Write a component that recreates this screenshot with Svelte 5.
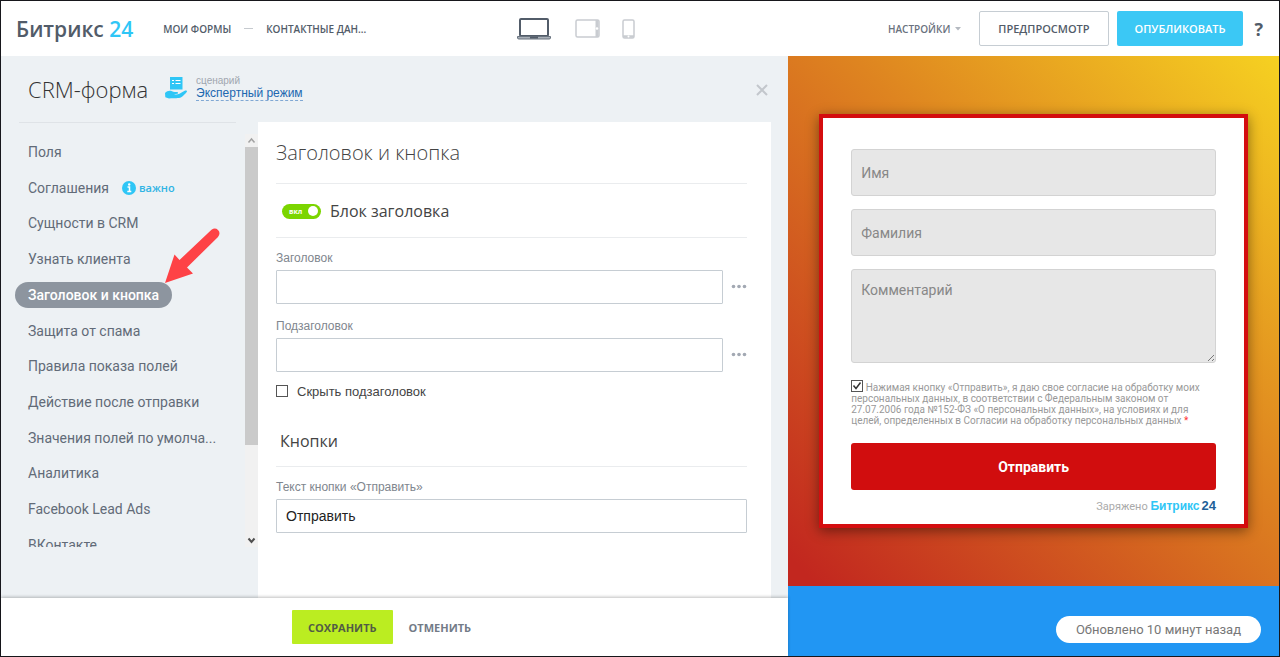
<script>
  const items = [
    { label: 'Поля' },
    { label: 'Соглашения', important: true },
    { label: 'Сущности в CRM' },
    { label: 'Узнать клиента' },
    { label: 'Заголовок и кнопка', active: true },
    { label: 'Защита от спама' },
    { label: 'Правила показа полей' },
    { label: 'Действие после отправки' },
    { label: 'Значения полей по умолча...' },
    { label: 'Аналитика' },
    { label: 'Facebook Lead Ads' },
    { label: 'ВКонтакте' }
  ];

  let headerOn = $state(true);
  let title = $state('');
  let subtitle = $state('');
  let hideSubtitle = $state(false);
  let submitText = $state('Отправить');
  let agreed = $state(true);
</script>

{#snippet more(name)}
  <button class="more" type="button" aria-label={name}>
    <svg width="16" height="6" viewBox="0 0 16 6" fill="#a3a9b3">
      <circle cx="2.500" cy="2.500" r="1.800" /><circle cx="8" cy="2.500" r="1.800" /><circle cx="13.500" cy="2.500" r="1.800" />
    </svg>
  </button>
{/snippet}

<div class="page">
  <header class="topbar">
    <div class="start">
      <a class="logo" href="#home">Битрикс <span>24</span></a>
      <nav class="crumbs">
        <a href="#forms">МОИ ФОРМЫ</a>
        <i></i>
        <a href="#contact">КОНТАКТНЫЕ ДАН...</a>
      </nav>
    </div>
    <div class="devices">
      <button type="button" aria-label="Компьютер">
        <svg width="36" height="24" viewBox="0 0 36 24" fill="none">
          <rect x="4" y="2" width="28" height="17" rx="1" fill="#fff" stroke="#525c69" stroke-width="2" />
          <path d="M1.500 19.500h33v1.500q0 1-1.500 1H3q-1.500 0-1.500-1z" fill="#a9b0b8" stroke="#6a7480" />
          <path d="M14 20.500h8" stroke="#525c69" stroke-width="2" />
        </svg>
      </button>
      <button type="button" aria-label="Планшет">
        <svg width="25" height="19" viewBox="0 0 25 19" fill="none">
          <rect x="1" y="1" width="23" height="17" rx="1.500" fill="#fff" stroke="#c9ccd1" stroke-width="1.500" />
          <path d="M22 1v17" stroke="#c9ccd1" stroke-width="3" />
          <circle cx="22" cy="9.500" r="1.300" fill="#fff" />
        </svg>
      </button>
      <button type="button" aria-label="Телефон">
        <svg width="13" height="20" viewBox="0 0 13 20" fill="none">
          <rect x="1" y="1" width="11" height="18" rx="1.500" fill="#fff" stroke="#c9ccd1" stroke-width="1.500" />
          <path d="M1 17.500h11" stroke="#c9ccd1" stroke-width="2.500" />
          <circle cx="6.500" cy="17.500" r="1" fill="#fff" />
        </svg>
      </button>
    </div>
    <div class="actions">
      <button class="settings" type="button">НАСТРОЙКИ
        <svg width="6" height="4" viewBox="0 0 6 4"><path d="M0 0h6L3 3.500z" fill="#b4b9c0" /></svg>
      </button>
      <button class="btn outline" type="button">ПРЕДПРОСМОТР</button>
      <button class="btn primary" type="button">ОПУБЛИКОВАТЬ</button>
      <button class="help" type="button">?</button>
    </div>
  </header>

  <main>
    <section class="editor">
      <div class="head">
        <h1>CRM-форма</h1>
        <svg class="hand" width="22" height="22" viewBox="0 0 22 22" fill="#2fc6f6">
          <path d="M5 0h12.500v12.500H5z" />
          <path d="M7 3.500h2M10.500 3.500h5M7 6.500h2M10.500 6.500h5" stroke="#fff" stroke-width="1" />
          <path d="M0 16C2 14 4.500 13.300 7 14.200c1.700.7 3.500.8 5.200.9 1 .1 1.200 1.500.2 1.700l-3.400.4c3.500 1 6-.4 8-1.900l3.200-1.700c1.300-.5 2.300.5 1.500 1.500-1.500 1.800-3.500 4-5.500 5.200-1.300.8-3 .9-5 .9H6l-2 .2-3.700-1.200z" />
        </svg>
        <div class="scenario">
          <span>сценарий</span>
          <a href="#scenario">Экспертный режим</a>
        </div>
        <button class="close" type="button" aria-label="Закрыть">
          <svg width="12" height="12" viewBox="0 0 12 12"><path d="M1 1l10 10M11 1L1 11" stroke="#c3c7cc" stroke-width="2" /></svg>
        </button>
      </div>

      <div class="work">
        <aside>
          <hr />
          <div class="scroller">
            <div class="clip">
              <ul>
                {#each items as item}
                  <li>
                    <a href="#section" class:active={item.active}>{item.label}</a>
                    {#if item.important}
                      <span class="note">
                        <svg width="14" height="14" viewBox="0 0 14 14">
                          <circle cx="7" cy="7" r="7" fill="#2fc6f6" />
                          <path d="M5.500 6H7.500v4.500M5.300 10.500h4" stroke="#fff" stroke-width="1.500" fill="none" />
                          <circle cx="7.200" cy="3.500" r="1.200" fill="#fff" />
                        </svg>
                        важно
                      </span>
                    {/if}
                    {#if item.active}
                      <svg class="arrow" width="56" height="56" viewBox="0 0 56 56" fill="#fe4246">
                        <path d="M0 55L9.500 26.500 14.500 32 46.500 1.800Q50-.8 53 2T53 9L22 39.500 28 45.500z" />
                      </svg>
                    {/if}
                  </li>
                {/each}
              </ul>
            </div>
            <div class="bar" aria-hidden="true">
              <svg width="13" height="13" viewBox="0 0 13 13"><path d="M3.500 8.500l3-3.500 3 3.500" fill="none" stroke="#a3a3a3" stroke-width="1.500" /></svg>
              <div class="track"><div class="thumb"></div></div>
              <svg width="13" height="13" viewBox="0 0 13 13"><path d="M3.500 4.500l3 3.500 3-3.500" fill="none" stroke="#505050" stroke-width="2" /></svg>
            </div>
          </div>
        </aside>

        <form class="panel" onsubmit={(e) => e.preventDefault()}>
          <h2>Заголовок и кнопка</h2>
          <div class="switchrow">
            <label>
              <input class="sr" type="checkbox" role="switch" bind:checked={headerOn} />
              <span class="switch" class:off={!headerOn}><b>{headerOn ? 'вкл' : 'выкл'}</b><i></i></span>
              Блок заголовка
            </label>
          </div>
          <label class="cap" for="title">Заголовок</label>
          <div class="row"><input id="title" type="text" bind:value={title} />{@render more('Ещё: заголовок')}</div>
          <label class="cap next" for="subtitle">Подзаголовок</label>
          <div class="row"><input id="subtitle" type="text" bind:value={subtitle} />{@render more('Ещё: подзаголовок')}</div>
          <label class="check"><input type="checkbox" bind:checked={hideSubtitle} />Скрыть подзаголовок</label>
          <h3>Кнопки</h3>
          <label class="cap" for="submit">Текст кнопки «Отправить»</label>
          <div class="row"><input id="submit" type="text" bind:value={submitText} /></div>
        </form>
      </div>

      <footer>
        <button class="save" type="button">СОХРАНИТЬ</button>
        <button class="cancel" type="button">ОТМЕНИТЬ</button>
      </footer>
    </section>

    <section class="preview">
      <div class="stage">
        <form class="card" onsubmit={(e) => e.preventDefault()}>
          <input type="text" placeholder="Имя" aria-label="Имя" />
          <input type="text" placeholder="Фамилия" aria-label="Фамилия" />
          <div class="area">
            <textarea placeholder="Комментарий" aria-label="Комментарий"></textarea>
            <svg width="8" height="8" viewBox="0 0 8 8"><path d="M1 7l6-6M5 7l2-2" stroke="#777" /></svg>
          </div>
          <label class="consent">
            <input type="checkbox" bind:checked={agreed} />
            Нажимая кнопку «Отправить», я даю свое согласие на обработку моих персональных данных, в соответствии с Федеральным законом от 27.07.2006 года №152-ФЗ «О персональных данных», на условиях и для целей, определенных в Согласии на обработку персональных данных <em>*</em>
          </label>
          <button type="submit">{submitText}</button>
          <p>Заряжено <b>Битрикс</b><strong>24</strong></p>
        </form>
      </div>
      <div class="status"><span>Обновлено 10 минут назад</span></div>
    </section>
  </main>
</div>

<style>
  :global(body) { margin: 0; }
  * { box-sizing: border-box; }
  button { border: 0; padding: 0; margin: 0; background: none; cursor: pointer; font-family: inherit; }
  svg { display: block; flex: none; }
  a { color: inherit; text-decoration: none; }

  .page {
    min-height: 100vh;
    display: flex;
    flex-direction: column;
    border: 1px solid #17171c;
    font-family: "Open Sans", sans-serif;
    color: #525c69;
    background: #fff;
  }

  .topbar { height: 55px; flex: none; display: flex; align-items: center; padding: 0 16px 0 15px; }
  .start { flex: 0 1 500px; display: flex; align-items: center; gap: 30px; }
  .logo { font-size: 21px; font-weight: 600; white-space: nowrap; }
  .logo span { color: #2fc6f6; }
  .crumbs { display: flex; align-items: center; gap: 13px; font-size: 10px; font-weight: 600; white-space: nowrap; }
  .crumbs i { width: 9px; height: 1px; background: #c6cacf; }
  .devices { display: flex; align-items: center; gap: 23px; }
  .devices button:last-child { margin-left: -1px; }
  .actions { margin-left: auto; display: flex; align-items: center; }
  .settings { display: flex; align-items: center; gap: 5px; margin-right: 18px; font-size: 10px; font-weight: 600; color: #6a727e; }
  .btn { height: 35px; padding: 0 18px; font-size: 11px; font-weight: 600; border-radius: 2px; white-space: nowrap; }
  .outline { border: 1px solid #c6cdd3; color: #525c69; margin-right: 8px; }
  .primary { background: #3bc8f5; color: #fff; }
  .help { font-size: 18px; font-weight: 700; color: #525c69; margin-left: 11px; }

  main { flex: 1; display: grid; grid-template-columns: minmax(0, 61.6fr) minmax(0, 38.4fr); }

  .editor { display: flex; flex-direction: column; background: #edf1f4; }
  .head { height: 66px; flex: none; display: flex; align-items: center; padding: 2px 20px 0 27px; }
  h1 { margin: 0 17px 2px 0; font-size: 22px; font-weight: 300; color: #333; white-space: nowrap; }
  .hand { margin-bottom: 4px; }
  .scenario { margin-left: 9px; display: flex; flex-direction: column; align-items: flex-start; font-family: "Liberation Sans", Arial, sans-serif; margin-bottom: 4px; }
  .scenario span { font-size: 10px; line-height: 12px; color: #a0a6af; }
  .scenario a { font-size: 12px; line-height: 13px; color: #2067b0; border-bottom: 1px dashed #80a8d4; }
  .close { margin-left: auto; }

  .work { flex: 1; display: flex; padding-right: 17px; }
  aside { width: 257px; flex: none; display: flex; flex-direction: column; padding-bottom: 51px; }
  hr { width: 217px; margin: 0 0 11px 18px; border: 0; border-top: 1px solid #dfe3e7; }
  .scroller { flex: 1; display: flex; }
  .clip { flex: 1; min-width: 0; overflow: hidden; display: flex; flex-direction: column; padding: 5px 0 0 14px; }
  ul { flex: 1; list-style: none; margin: 0 0 -11px; padding: 0; display: flex; flex-direction: column; justify-content: space-between; gap: 8px; }
  li { position: relative; display: flex; align-items: center; height: 26px; font: 14px/26px Roboto, sans-serif; color: #626b78; white-space: nowrap; }
  li a { padding: 0 13px; border-radius: 13px; }
  li a.active { background: #8d959f; color: #fff; font-weight: 500; }
  .note { display: flex; align-items: center; gap: 3px; font: 600 11px/26px "Open Sans", sans-serif; color: #2fb4e4; }
  .arrow { position: absolute; left: 150px; bottom: 24px; }
  .bar { width: 13px; display: flex; flex-direction: column; background: #f1f1f1; }
  .track { flex: 1; }
  .thumb { height: 77%; background: #cacaca; }

  .panel { flex: 1; min-width: 0; background: #fff; padding: 0 24px 20px 18px; font-family: "Liberation Sans", Arial, sans-serif; }
  h2 { margin: 0; height: 62px; border-bottom: 1px solid #eaecee; font: 300 20px/62px "Open Sans", sans-serif; color: #444; }
  .switchrow { height: 54px; border-bottom: 1px solid #eaecee; margin-bottom: 12px; display: flex; align-items: center; padding: 1px 0 0 6px; }
  .switchrow label { display: flex; align-items: center; font: 16px/24px "Open Sans", sans-serif; color: #444; }
  .sr { position: absolute; opacity: 0; width: 1px; height: 1px; margin: 0; }
  .switch { width: 39px; height: 15px; margin-right: 9px; padding: 0 3px 0 7px; border-radius: 8px; background: #7bd500; display: flex; align-items: center; justify-content: space-between; }
  .switch.off { background: #b4b9c0; }
  .switch b { font: 700 7px/15px "Open Sans", sans-serif; color: #fff; }
  .switch i { width: 10px; height: 10px; border-radius: 5px; background: #fff; }
  .cap { display: block; font-size: 12px; line-height: 16px; margin-bottom: 4px; color: #80868e; }
  .next { margin-top: 14px; }
  .row { display: flex; align-items: center; }
  .row input { flex: 1; min-width: 0; height: 34px; border: 1px solid #c6cdd3; border-radius: 1px; padding: 0 9px; background: #fff; font: 14px "Liberation Sans", Arial, sans-serif; color: #222; }
  .more { margin-left: 8px; }
  .check { display: flex; align-items: center; height: 20px; margin-top: 9px; font-size: 13px; color: #444; }
  input[type="checkbox"]:not(.sr) { appearance: none; flex: none; width: 12px; height: 12px; margin: 0; border: 1px solid #555; background: #fff; }
  .check input[type="checkbox"]:not(.sr) { margin-right: 9px; }
  input[type="checkbox"]:not(.sr):checked { background: #fff url("data:image/svg+xml,%3Csvg xmlns='http://www.w3.org/2000/svg' viewBox='0 0 10 10'%3E%3Cpath d='M1.500 4.500l2.500 3 4.500-6' fill='none' stroke='%23333' stroke-width='1.500'/%3E%3C/svg%3E") center / 10px 10px no-repeat; }
  h3 { margin: 15px 0 12px; padding-left: 4px; height: 51px; border-bottom: 1px solid #eaecee; font: 16px/50px "Open Sans", sans-serif; color: #444; }

  footer { position: relative; height: 58px; flex: none; display: flex; align-items: center; justify-content: center; padding-right: 10px; background: #fff; box-shadow: 0 -1px 3px rgba(0, 0, 0, .25); }
  footer button { height: 34px; padding: 0 16px; font-size: 11px; font-weight: 700; border-radius: 1px; }
  .save { background: #bbed21; color: #525c45; }
  .cancel { color: #737b87; }

  .preview { display: flex; flex-direction: column; background: #2196f3; font-family: Roboto, sans-serif; }
  .stage { flex: 1; padding: 58px 31px 55px; background: linear-gradient(45deg, #c2271f 3%, #de8420 58%, #f6d121 100%); }
  .card { display: flex; flex-direction: column; border: 4px solid #d40d0f; background: #fff; padding: 31px 28px 9px; box-shadow: 0 3px 12px rgba(0, 0, 0, .45); }
  .card > input, textarea { display: block; width: 100%; height: 47px; margin: 0 0 13px; padding: 0 9px; border: 1px solid #d3d3d3; border-radius: 3px; background: #e7e7e7; font: 14px/18px Roboto, sans-serif; color: #444; }
  .card > input::placeholder, textarea::placeholder { color: #888; opacity: 1; }
  .area { position: relative; }
  textarea { height: 94px; margin: 0; padding-top: 11px; resize: none; }
  .area svg { position: absolute; right: 1px; bottom: 1px; }
  .consent { margin-top: 17px; font-size: 10px; line-height: 11px; color: #999; }
  .consent input[type="checkbox"] { vertical-align: -1px; }
  .consent em { color: #f33; font-style: normal; }
  .card button { height: 47px; margin-top: 17px; border-radius: 3px; background: #d10d0e; color: #fff; font-size: 14px; font-weight: 700; }
  .card p { margin: 8px 0 0; text-align: right; font-size: 11px; line-height: 16px; color: #aaa; }
  .card p b { font: 700 12px/16px "Liberation Sans", Arial, sans-serif; color: #2fc6f6; }
  .card p strong { margin-left: 2px; font: 700 13px/16px "Liberation Sans", Arial, sans-serif; color: #215f98; }
  .status { height: 70px; flex: none; display: flex; align-items: center; justify-content: flex-end; padding: 16px 18px 0 0; }
  .status span { height: 27px; border-radius: 14px; padding: 0 20px; background: #fff; font-size: 13px; line-height: 27px; color: #777; }
</style>
